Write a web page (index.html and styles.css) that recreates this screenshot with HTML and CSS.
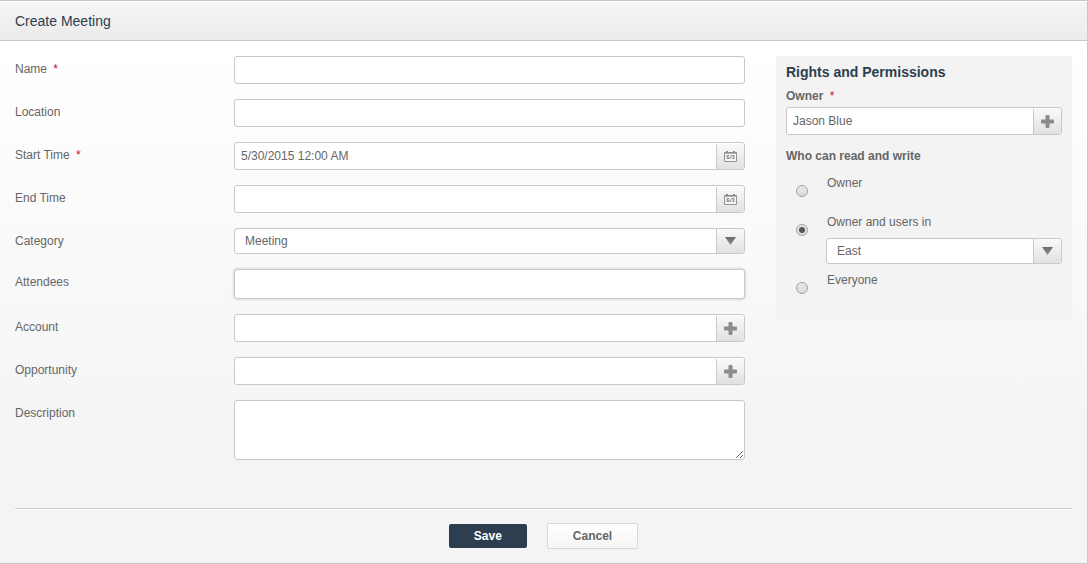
FILE: index.html
```html
<!DOCTYPE html>
<html lang="en">
<head>
<meta charset="utf-8">
<meta name="viewport" content="width=device-width, initial-scale=1">
<title>Create Meeting</title>
<link rel="stylesheet" href="styles.css">
</head>
<body>
<svg class="symbols" aria-hidden="true">
  <symbol id="plus" viewBox="0 0 13 13"><path d="M4.500 1Q4.500 0 5.500 0H7.500Q8.500 0 8.500 1V4.500H12Q13 4.500 13 5.500V7.500Q13 8.500 12 8.500H8.500V12Q8.500 13 7.500 13H5.500Q4.500 13 4.500 12V8.500H1Q0 8.500 0 7.500V5.500Q0 4.500 1 4.500H4.500Z" fill="#8c8c8c"/></symbol>
  <symbol id="calendar" viewBox="0 0 13 11"><path d="M.5 1.500H12.500V10.500H.5Z" fill="#f6f6f6" stroke="#8e9298"/><path d="M1 2.500H12" stroke="#b0b0b0"/><path d="M2 1H4M9 1H11" stroke="#888" stroke-width="2"/><path d="M5 4.500H3V7.500H5V6H3M7.500 4L6 8M8 4.500H10V6H8.500M10 6V7.500H8" fill="none" stroke="#888" stroke-width=".9"/></symbol>
</svg>
<form class="dialog">
  <header class="dialog-header"><h1 class="title">Create Meeting</h1></header>
  <div class="content">
    <div class="fields">
      <div class="row"><label class="label" for="name">Name <span class="required">*</span></label><input class="control" id="name" type="text" required></div>
      <div class="row"><label class="label" for="location">Location</label><input class="control" id="location" type="text"></div>
      <div class="row"><label class="label" for="start">Start Time <span class="required">*</span></label>
        <div class="group"><input class="control" id="start" type="text" value="5/30/2015 12:00 AM" required><button class="addon" type="button" aria-label="Choose start time"><svg class="calendar"><use href="#calendar"/></svg></button></div></div>
      <div class="row"><label class="label" for="end">End Time</label>
        <div class="group"><input class="control" id="end" type="text"><button class="addon" type="button" aria-label="Choose end time"><svg class="calendar"><use href="#calendar"/></svg></button></div></div>
      <div class="row"><label class="label" for="category">Category</label>
        <div class="select-box"><select class="select" id="category"><option>Meeting</option></select><span class="arrow"></span></div></div>
      <div class="row"><label class="label" for="attendees">Attendees</label><input class="control attendees" id="attendees" type="text"></div>
      <div class="row"><label class="label" for="account">Account</label>
        <div class="group"><input class="control" id="account" type="text"><button class="addon" type="button" aria-label="Select account"><svg class="plus"><use href="#plus"/></svg></button></div></div>
      <div class="row"><label class="label" for="opportunity">Opportunity</label>
        <div class="group"><input class="control" id="opportunity" type="text"><button class="addon" type="button" aria-label="Select opportunity"><svg class="plus"><use href="#plus"/></svg></button></div></div>
      <div class="row"><label class="label" for="description">Description</label><textarea class="control description" id="description"></textarea></div>
    </div>
    <aside class="rights">
      <h2 class="rights-title">Rights and Permissions</h2>
      <label class="rights-label" for="owner">Owner <span class="required">*</span></label>
      <div class="group"><input class="control" id="owner" type="text" value="Jason Blue" required><button class="addon" type="button" aria-label="Select owner"><svg class="plus"><use href="#plus"/></svg></button></div>
      <fieldset class="access">
        <legend class="legend">Who can read and write</legend>
        <div class="option"><input class="radio" type="radio" name="access" id="access-owner"><label for="access-owner">Owner</label></div>
        <div class="option option-team"><input class="radio" type="radio" name="access" id="access-group" checked><label for="access-group">Owner and users in</label></div>
        <div class="select-box team"><select class="select" aria-label="Users in"><option>East</option></select><span class="arrow"></span></div>
        <div class="option"><input class="radio" type="radio" name="access" id="access-all"><label for="access-all">Everyone</label></div>
      </fieldset>
    </aside>
  </div>
  <footer class="actions"><button class="button save" type="submit">Save</button><button class="button cancel" type="button">Cancel</button></footer>
</form>
</body>
</html>
```
FILE: styles.css
```css
* { box-sizing: border-box; }

body {
  margin: 0;
  background: #fff;
  color: #666;
  font: 12px/16px "Liberation Sans", Arial, sans-serif;
}

input, select, textarea, button { margin: 0; color: inherit; font: inherit; }

.symbols { position: absolute; width: 0; height: 0; }

.dialog {
  min-height: 100vh;
  border: solid #c8c8c8;
  border-width: 1px 1px 1px 0;
  background: linear-gradient(#fff 40px, #f4f4f4 450px);
}

.dialog-header {
  padding: 10px 15px 9px;
  border-bottom: 1px solid #c8c8c8;
  border-top: 1px solid #fff;
  background: linear-gradient(#f5f5f5, #ebebeb);
}

.title { margin: 0; color: #2c3e50; font-size: 14px; font-weight: 400; line-height: 19px; }

.content {
  display: grid;
  grid-template-columns: minmax(0, 1fr) 296px;
  align-items: start;
  gap: 31px;
  margin: 0 15px;
  padding: 15px 0 48px;
  border-bottom: 1px solid #c8c8c8;
  box-shadow: 0 1px #fff;
}

.fields { display: grid; gap: 15px; }
.row { display: grid; grid-template-columns: 3fr 7fr; align-items: start; }
.label { padding-top: 5px; }
.required { margin-left: 3px; color: #c8102e; font-weight: 400; }

.control {
  display: block;
  width: 100%;
  height: 28px;
  padding: 0 6px;
  border: 1px solid #c8c8c8;
  border-radius: 3px;
  outline: 0;
  background: #fff;
}

.attendees { height: 30px; box-shadow: 0 0 3px #bbb; }
.description { height: 60px; padding: 5px 6px; resize: both; }

.group {
  display: flex;
  border: 1px solid #c8c8c8;
  border-radius: 3px;
  background: #fff;
  overflow: hidden;
}
.group .control { flex: 1; min-width: 0; height: 26px; border: 0; }

.addon {
  display: grid;
  place-items: center;
  align-self: end;
  width: 28px;
  height: 25px;
  padding: 0;
  border: 0;
  border-left: 1px solid #c8c8c8;
  background: linear-gradient(#f9f9f9, #e1e1e1);
}
.plus { width: 13px; height: 13px; }
.calendar { width: 13px; height: 11px; }

.select-box {
  display: grid;
  grid-template-columns: minmax(0, 1fr) 28px;
  height: 26px;
  border: 1px solid #c8c8c8;
  border-radius: 3px;
  background: #fff;
  overflow: hidden;
}
.select {
  grid-area: 1 / 1 / 2 / 3;
  width: 100%;
  padding: 0 34px 0 10px;
  border: 0;
  outline: 0;
  appearance: none;
  background: transparent;
}
.arrow {
  display: grid;
  grid-area: 1 / 2;
  place-items: center;
  border-left: 1px solid #c8c8c8;
  background: linear-gradient(#f9f9f9, #e1e1e1);
  pointer-events: none;
}
.arrow::before {
  content: "";
  width: 11px;
  height: 8px;
  background: linear-gradient(#6c6c6c, #8c8c8c);
  clip-path: polygon(0 0, 100% 0, 50% 100%);
}

.rights { padding: 8px 10px 24px; background: #f3f3f3; }
.rights-title { margin: 0 0 8px; color: #2c3e50; font-size: 14px; line-height: 16px; }
.rights-label { display: block; margin-bottom: 3px; font-weight: 700; }

.access { min-width: 0; margin: 0; padding: 13px 0 0; border: 0; }
.legend { float: left; width: 100%; padding: 0; font-weight: 700; }
.option {
  display: grid;
  grid-template-columns: 31px minmax(0, 1fr);
  clear: both;
  align-items: start;
  height: 39px;
  padding: 11px 0 0 10px;
}
.option-team { height: 35px; }
.radio {
  display: grid;
  place-items: center;
  width: 12px;
  height: 12px;
  margin-top: 10px;
  border: 1px solid #a0a0a0;
  border-radius: 50%;
  appearance: none;
  background: linear-gradient(#e8e8e8, #dcdcdc);
}
.radio:checked::before { content: ""; width: 6px; height: 6px; border-radius: 50%; background: #555; }
.team { margin-left: 40px; }
.team + .option { padding-top: 8px; height: 33px; }

.actions { display: flex; justify-content: center; align-items: center; gap: 20px; padding: 14px 15px; }
.button { padding: 0 25px; border-radius: 2px; font-weight: 700; font-size: 12px; }
.save { height: 24px; border: 0; background: #2c3e50; color: #fff; }
.cancel { height: 26px; border: 1px solid #d8d8d8; background: linear-gradient(#fff, #f5f5f5); }
```
